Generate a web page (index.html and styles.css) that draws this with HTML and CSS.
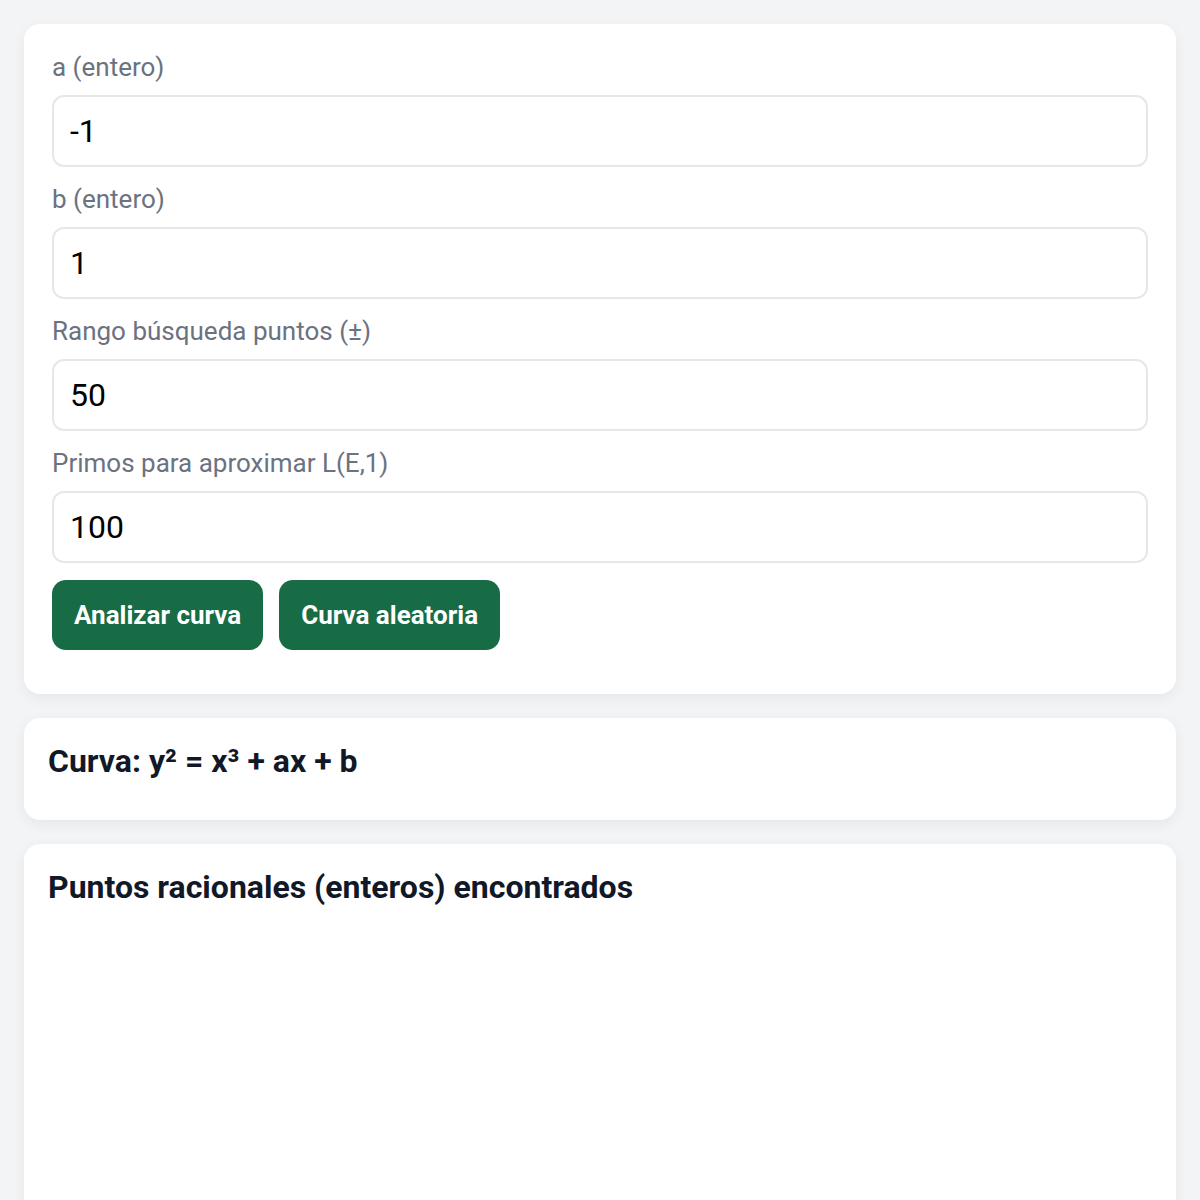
FILE: index.html
```html
<!DOCTYPE html>
<html lang="es">
<head>
<meta charset="utf-8">
<link rel="stylesheet" href="styles.css">
</head>
<body>
<main class="page">
  <section class="card form-card">
    <div class="field">
      <label class="label" for="a">a (entero)</label>
      <input class="input" id="a" type="text" value="-1">
    </div>
    <div class="field">
      <label class="label" for="b">b (entero)</label>
      <input class="input" id="b" type="text" value="1">
    </div>
    <div class="field">
      <label class="label" for="r">Rango búsqueda puntos (±)</label>
      <input class="input" id="r" type="text" value="50">
    </div>
    <div class="field">
      <label class="label" for="p">Primos para aproximar L(E,1)</label>
      <input class="input" id="p" type="text" value="100">
    </div>
    <div class="actions">
      <button class="btn">Analizar curva</button>
      <button class="btn">Curva aleatoria</button>
    </div>
  </section>
  <section class="card info-card">
    <h2 class="title">Curva: y² = x³ + ax + b</h2>
  </section>
  <section class="card info-card tall">
    <h2 class="title">Puntos racionales (enteros) encontrados</h2>
  </section>
</main>
</body>
</html>
```
FILE: styles.css
```css
html, body {
  margin: 0;
  padding: 0;
  background: #f3f4f6;
  font-family: Roboto, "Liberation Sans", sans-serif;
}
.page {
  padding: 24px;
  display: flex;
  flex-direction: column;
  gap: 24px;
}
.card {
  background: #ffffff;
  border-radius: 16px;
  box-shadow: 0 4px 14px rgba(17, 24, 39, 0.06);
}
.form-card {
  padding: 27px 28px 44px;
  display: flex;
  flex-direction: column;
  gap: 16px;
}
.field {
  display: flex;
  flex-direction: column;
  gap: 12px;
}
.label {
  font-size: 26px;
  line-height: 32px;
  color: #6b7280;
}
.input {
  height: 72px;
  box-sizing: border-box;
  border: 2px solid #e5e7eb;
  border-radius: 12px;
  padding: 0 16px;
  font-family: Roboto, "Liberation Sans", sans-serif;
  font-size: 32px;
  color: #000;
  background: #fff;
  outline: none;
}
.actions {
  display: flex;
  gap: 16px;
  margin-top: 1px;
}
.btn {
  height: 70px;
  padding: 0 22px;
  border: none;
  border-radius: 14px;
  background: #176c45;
  color: #fff;
  font-family: Roboto, "Liberation Sans", sans-serif;
  font-size: 26px;
  font-weight: 700;
}
.info-card {
  padding: 24px 24px 40px;
}
.title {
  margin: 0;
  font-size: 32px;
  line-height: 38px;
  font-weight: 700;
  color: #111827;
}
.tall {
  min-height: 500px;
}
```
